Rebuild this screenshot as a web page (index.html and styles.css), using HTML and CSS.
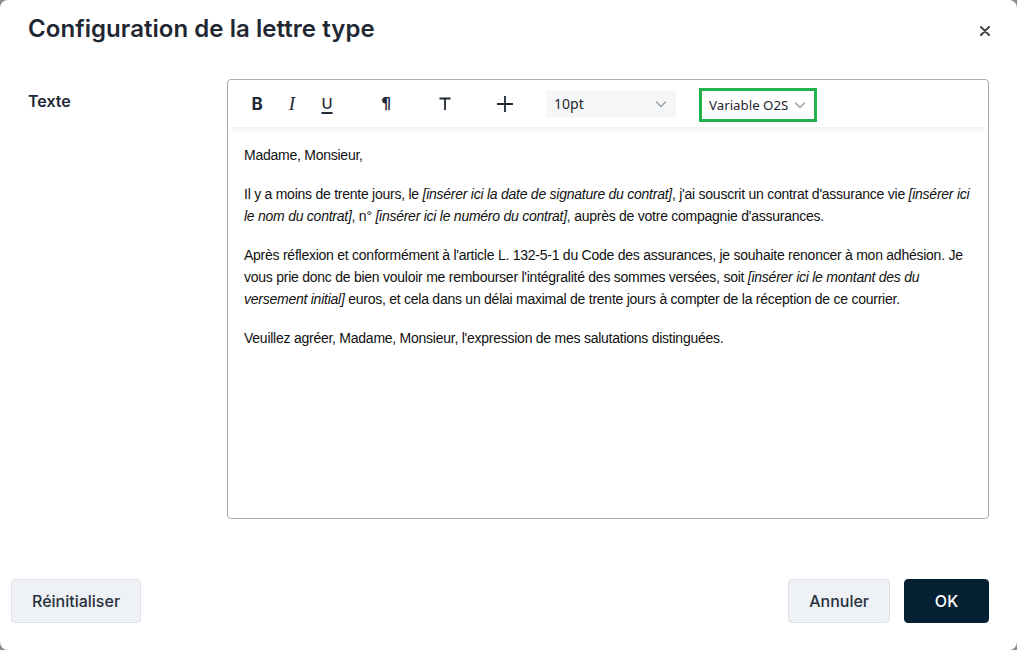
FILE: index.html
```html
<!DOCTYPE html>
<html lang="fr">
<head>
<meta charset="utf-8">
<title>Configuration de la lettre type</title>
<link rel="stylesheet" href="styles.css">
</head>
<body>
<div class="modal">
  <header class="modal-head">
    <h1 class="title">Configuration de la lettre type</h1>
    <button class="close" aria-label="Fermer">
      <svg width="10" height="10" viewBox="0 0 10 10"><path d="M1 1L9 9M9 1L1 9" stroke="#444" stroke-width="2" stroke-linecap="round"/></svg>
    </button>
  </header>
  <div class="modal-body">
    <div class="label">Texte</div>
    <div class="editor">
      <div class="toolbar">
        <span class="tb tb-b">B</span>
        <span class="tb tb-i">I</span>
        <span class="tb tb-u">U</span>
        <span class="tb tb-p">¶</span>
        <span class="tb tb-t">
          <svg width="14" height="14" viewBox="0 0 14 14"><path d="M1.5 1.5H12.5M7 1.5V13" stroke="#1f2937" stroke-width="1.8" fill="none"/></svg>
        </span>
        <span class="tb tb-plus">
          <svg width="18" height="18" viewBox="0 0 18 18"><path d="M1 9H17M9 1V17" stroke="#1f2937" stroke-width="1.8" fill="none"/></svg>
        </span>
        <div class="select size">
          <span>10pt</span>
          <svg class="chev" width="12" height="8" viewBox="0 0 12 8"><path d="M1 1.5L6 6.5L11 1.5" stroke="#9aa0a8" stroke-width="1.4" fill="none"/></svg>
        </div>
        <div class="select variable">
          <span>Variable O2S</span>
          <svg class="chev" width="12" height="8" viewBox="0 0 12 8"><path d="M1 1.5L6 6.5L11 1.5" stroke="#9aa0a8" stroke-width="1.4" fill="none"/></svg>
        </div>
      </div>
      <div class="content">
        <p>Madame, Monsieur,</p>
        <p>Il y a moins de trente jours, le <em>[insérer ici la date de signature du contrat]</em>, j'ai souscrit un contrat d'assurance vie <em>[insérer ici le nom du contrat]</em>, n° <em>[insérer ici le numéro du contrat]</em>, auprès de votre compagnie d'assurances.</p>
        <p>Après réflexion et conformément à l'article L. 132-5-1 du Code des assurances, je souhaite renoncer à mon adhésion. Je vous prie donc de bien vouloir me rembourser l'intégralité des sommes versées, soit <em>[insérer ici le montant des du versement initial]</em> euros, et cela dans un délai maximal de trente jours à compter de la réception de ce courrier.</p>
        <p>Veuillez agréer, Madame, Monsieur, l'expression de mes salutations distinguées.</p>
      </div>
    </div>
  </div>
  <footer class="modal-foot">
    <button class="btn btn-light">Réinitialiser</button>
    <div class="foot-right">
      <button class="btn btn-light">Annuler</button>
      <button class="btn btn-dark">OK</button>
    </div>
  </footer>
</div>
</body>
</html>
```

FILE: styles.css
```css
* { box-sizing: border-box; }
html, body { margin: 0; padding: 0; }
body {
  width: 1017px;
  height: 650px;
  background: #8a8a8a;
  font-family: Inter, "Liberation Sans", sans-serif;
  color: #1f2733;
  overflow: hidden;
}
.modal {
  width: 1017px;
  height: 650px;
  background: #fff;
  border-radius: 8px;
  display: flex;
  flex-direction: column;
}
.modal-head {
  display: flex;
  align-items: center;
  justify-content: space-between;
  padding: 0 28px 0 28px;
  height: 57px;
}
.title {
  margin: 0;
  font-size: 24px;
  font-weight: 600;
  color: #1f2733;
  letter-spacing: 0.05px;
}
.close {
  border: 0;
  background: none;
  padding: 0;
  width: 10px;
  height: 10px;
  margin-right: -1px;
  margin-top: 4px;
  display: flex;
}
.modal-body {
  display: flex;
  padding: 22px 28px 0 28px;
}
.label {
  width: 199px;
  font-size: 16px;
  font-weight: 600;
  padding-top: 12px;
  color: #1f2733;
}
.editor {
  width: 762px;
  height: 440px;
  border: 1px solid #a9afb7;
  border-radius: 4px;
  display: flex;
  flex-direction: column;
}
.toolbar {
  height: 48px;
  display: flex;
  align-items: center;
  padding-left: 21px;
  box-shadow: 0 3px 6px -2px rgba(0,0,0,0.07);
  border-bottom: 1px solid #f3f4f6;
}
.tb {
  display: flex;
  align-items: center;
  justify-content: center;
  height: 24px;
  color: #1f2937;
}
.tb-b { font-weight: 700; font-size: 17px; width: 16px; margin-right: 19px; }
.tb-i { font-family: "Liberation Serif", serif; font-style: italic; font-size: 19px; width: 16px; margin-right: 19px; }
.tb-u {
  font-weight: 500; font-size: 15px; width: 16px; margin-right: 43px;
  text-decoration: underline; text-underline-offset: 3px; text-decoration-thickness: 1.5px;
}
.tb-p { font-family: "DejaVu Sans", sans-serif; font-weight: 700; font-size: 16px; width: 16px; margin-right: 43px; }
.tb-t { width: 16px; margin-right: 43px; }
.tb-plus { width: 18px; margin-right: 32px; }
.select {
  display: flex;
  align-items: center;
  font-family: "Noto Sans", "Open Sans", sans-serif;
  font-size: 14px;
  color: #1f2733;
}
.size {
  width: 130px;
  height: 28px;
  background: #f5f6f7;
  border-radius: 4px;
  padding: 0 9px 0 8px;
  justify-content: space-between;
  margin-right: 23px;
}
.variable {
  height: 34px;
  border: 3px solid #22b14c;
  padding: 0 8px 0 7px;
  gap: 6px;
  margin-top: 2px;
  font-size: 13.3px;
  letter-spacing: 0;
}
.content {
  padding: 16px 16px;
  font-family: "Liberation Sans", Arial, sans-serif;
  font-size: 14px;
  letter-spacing: -0.25px;
  line-height: 22px;
  color: #111;
}
.content p { margin: 0 0 17px 0; }
.content em { font-style: italic; }
.modal-foot {
  margin-top: auto;
  display: flex;
  justify-content: space-between;
  align-items: center;
  padding: 0 28px 27px 11px;
}
.foot-right { display: flex; gap: 14px; }
.btn {
  height: 44px;
  border-radius: 4px;
  font-family: Inter, "Liberation Sans", sans-serif;
  font-size: 16px;
  font-weight: 500;
  padding: 0 20px;
  cursor: pointer;
}
.btn-light {
  background: #eef1f5;
  border: 1px solid #dde1e6;
  color: #27303c;
}
.btn-dark {
  background: #062133;
  border: 1px solid #062133;
  color: #fff;
  width: 85px;
}
```
